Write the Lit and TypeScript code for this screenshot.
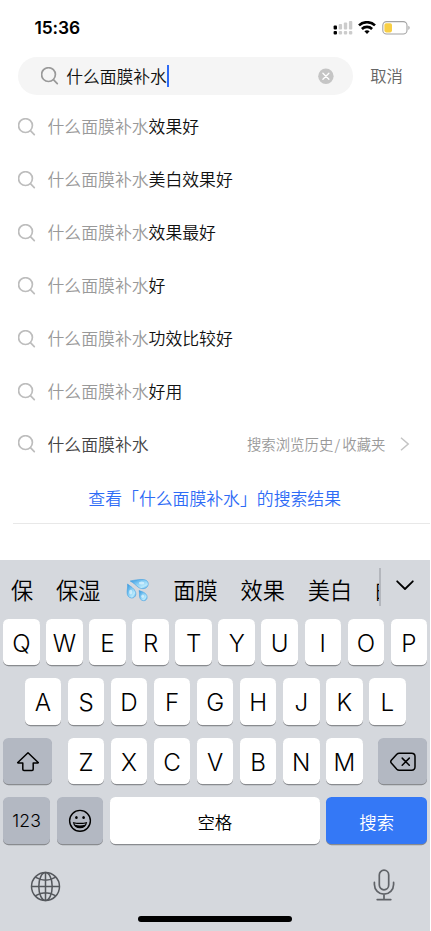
import { LitElement, html, css, svg } from "lit";
import { customElement, property } from "lit/decorators.js";
import { classMap } from "lit/directives/class-map.js";

const QUERY = "什么面膜补水";
const SUGGESTIONS = ["效果好", "美白效果好", "效果最好", "好", "功效比较好", "好用"];

const searchIcon = html`<svg class="lens" width="18" height="18" viewBox="0 0 18 18" fill="none" stroke="currentColor" stroke-width="1.7">
  <circle cx="7.5" cy="7.6" r="6.9"></circle>
  <path d="M12.4 12.6L16.3 16.6" stroke-linecap="round"></path>
</svg>`;

@customElement("status-bar")
class StatusBar extends LitElement {
  static styles = css`
    :host { display: flex; height: 57px; box-sizing: border-box; padding: 0 20px 2px 34.5px; align-items: center; justify-content: space-between; }
    .time { font: 600 17.4px/20px Inter, sans-serif; letter-spacing: -0.1px; color: #000; }
    .icons { display: flex; align-items: center; }
    .wifi { margin-left: 5.5px; }
    .battery { margin-left: 6px; }
  `;
  render() {
    const bars = [4, 5.4, 7, 8.4];
    return html`<span class="time">15:36</span>
      <span class="icons">
        <svg width="20" height="14" viewBox="0 0 20 14">
          ${bars.map((h, i) => svg`
            <rect x=${0.6 + i * 5.1} y=${8.4 - h} width="3.4" height=${h} rx="1" fill=${i ? "#ccc" : "#000"}></rect>
            <rect x=${0.6 + i * 5.1} y="10" width="3.4" height="3.6" rx="1.1" fill=${i ? "#ccc" : "#000"}></rect>`)}
        </svg>
        <svg class="wifi" width="18" height="14" viewBox="0 0 18 14" fill="none" stroke="#000" stroke-width="2.6">
          <path d="M1 4.4A11.6 11.6 0 0 1 17 4.4"></path>
          <path d="M3.9 8A7.3 7.3 0 0 1 14.1 8"></path>
          <path d="M6.4 10.3A3.9 3.9 0 0 1 11.6 10.3L9 13Z" fill="#000" stroke="none"></path>
        </svg>
        <svg class="battery" width="29" height="14" viewBox="0 0 29 14">
          <rect x="0.8" y="0.6" width="24.2" height="12.4" rx="3.8" fill="none" stroke="#a2a2a2" stroke-width="1.1"></rect>
          <rect x="2.4" y="2.2" width="7.6" height="9.2" rx="1.8" fill="#f8cf45"></rect>
          <path d="M26.4 4.7A2.4 2.4 0 0 1 26.4 8.9Z" fill="#a2a2a2"></path>
        </svg>
      </span>`;
  }
}

@customElement("search-header")
class SearchHeader extends LitElement {
  static styles = css`
    :host { display: flex; align-items: center; height: 38px; padding-left: 17.7px; font-size: 16.8px; }
    .box { display: flex; align-items: center; width: 335px; height: 38px; box-sizing: border-box; border-radius: 19px; background: #f5f5f5; padding: 0 18.5px 0 23.3px; }
    .lens { color: #999; flex: none; }
    .text { margin-left: 7.2px; color: #111; line-height: 24px; padding-bottom: 1px; }
    .caret { width: 2px; height: 22px; background: #2e6bf6; margin-left: -0.3px; }
    .clear { margin-left: auto; }
    .cancel { margin-left: 17.5px; color: #666; font-size: 16.4px; padding-bottom: 1.5px; }
  `;
  render() {
    return html`<div class="box">${searchIcon}<span class="text">${QUERY}</span><span class="caret"></span>
        <svg class="clear" width="16" height="16" viewBox="0 0 16 16"><circle cx="7.9" cy="8.3" r="7.7" fill="#c5c5c5"></circle>
          <path d="M4.9 5.3L10.9 11.3M10.9 5.3L4.9 11.3" stroke="#fff" stroke-width="1.3" stroke-linecap="round"></path></svg>
      </div><span class="cancel">取消</span>`;
  }
}

@customElement("suggestion-list")
class SuggestionList extends LitElement {
  static styles = css`
    :host { display: block; padding-top: 5.5px; font-size: 16.85px; }
    .row { display: flex; align-items: center; height: 53px; padding: 0 20px 0 18px; color: #111; }
    .row span { padding-bottom: 2.4px; }
    .row.own { height: 52px; color: #444; }
    .row.own span { padding-bottom: 1.4px; }
    .row.own .lens { margin-top: -1.5px; }
    .lens { color: #bdbdbd; flex: none; margin-right: 11.5px; }
    .dim { color: #999; }
    .row.own .history { margin-left: auto; font-size: 14.4px; color: #999; padding-bottom: 2px; }
    .slash { margin: 0 1.2px; letter-spacing: 1px; }
    .arrow { margin-left: 14.5px; margin-top: -1px; }
    .result { display: flex; justify-content: center; align-items: center; height: 53px; color: #2e6bf6; padding-right: 1.6px; }
    .line { height: 1px; background: #e8e8e8; margin: -1px 1px 0 13px; }
  `;
  render() {
    return html`${SUGGESTIONS.map((s) => html`<div class="row">${searchIcon}<span class="dim">${QUERY}</span><span>${s}</span></div>`)}
      <div class="row own">${searchIcon}<span>${QUERY}</span><span class="history">搜索浏览历史<span class="slash">/</span>收藏夹</span>
        <svg class="arrow" width="11" height="14" viewBox="0 0 11 14" fill="none" stroke="#c4c4c4" stroke-width="1.5"><path d="M1 0.8L8.2 7L1 13.2"></path></svg>
      </div>
      <div class="result">查看「${QUERY}」的搜索结果</div>
      <div class="line"></div>`;
  }
}

@customElement("key-cap")
class KeyCap extends LitElement {
  @property() kind = "letter";
  static styles = css`
    :host { display: block; height: 46.3px; }
    .cap { height: 100%; display: flex; align-items: center; justify-content: center; border-radius: 5.5px; background: #fff; color: #000; box-shadow: 0 1.2px 0 #898b8f; box-sizing: border-box; }
    .letter { font: 350 24.2px/30px Inter, sans-serif; padding-top: 3px; }
    .gray { background: #b3b8c2; font: 350 17.6px/22px Inter, sans-serif; padding-top: 1px; letter-spacing: 0.2px; }
    .word { font-size: 17.4px; padding-top: 1.5px; }
    .blue { background: #3478f6; color: #fff; }
  `;
  render() {
    const k = this.kind;
    return html`<div class=${classMap({ cap: true, letter: k === "letter", gray: k === "gray", word: k === "word" || k === "blue", blue: k === "blue" })}><slot></slot></div>`;
  }
}

const shiftIcon = html`<svg width="24" height="22" viewBox="0 0 24 22" fill="none" stroke="#000" stroke-width="1.5" stroke-linejoin="round">
  <path d="M12 1.7L22.2 11.5Q22.5 12 21.8 12H17.2V18.2Q17.2 19.4 16 19.4H8Q6.8 19.4 6.8 18.2V12H2.2Q1.5 12 1.8 11.5Z"></path></svg>`;

const deleteIcon = html`<svg width="26" height="20" viewBox="0 0 26 20" fill="none" stroke="#000" stroke-width="1.5" stroke-linejoin="round" stroke-linecap="round">
  <path d="M9.2 1.2H21.6Q25 1.2 25 4.6V14.8Q25 18.2 21.6 18.2H9.2Q7.8 18.2 6.8 17.2L1.3 11.1Q0.2 9.7 1.3 8.3L6.8 2.2Q7.8 1.2 9.2 1.2Z"></path>
  <path d="M12.2 6.1L19.3 13.3M19.3 6.1L12.2 13.3"></path></svg>`;

const smileIcon = html`<svg width="24" height="24" viewBox="0 0 24 24" fill="none" stroke="#000" stroke-width="1.4">
  <circle cx="12" cy="11.8" r="10.4"></circle>
  <ellipse cx="8.4" cy="8.4" rx="1.3" ry="1.5" fill="#000" stroke="none"></ellipse>
  <ellipse cx="15.6" cy="8.4" rx="1.3" ry="1.5" fill="#000" stroke="none"></ellipse>
  <path d="M4.8 12.9Q12 14.6 19.2 12.9Q18 19.2 12 19.2T4.8 12.9Z" fill="#000" stroke="none"></path>
  <path d="M6.3 14.4Q12 15.5 17.7 14.4L16.9 15.7Q12 17.2 7.1 15.7Z" fill="#b3b8c2" stroke="none"></path></svg>`;

const dropsIcon = html`<svg class="drops" width="24" height="24" viewBox="0 0 24 24">
  <defs><linearGradient id="g" x1="0" y1="0" x2="1" y2="1"><stop offset="0" stop-color="#2f93de"></stop><stop offset=".45" stop-color="#86cdf4"></stop><stop offset=".75" stop-color="#b9e9fc"></stop><stop offset="1" stop-color="#369be3"></stop></linearGradient></defs>
  <g fill="url(#g)" stroke="#3f9fe2" stroke-width=".6">
    <path d="M4.2 3C8.5 2.2 13 1.2 17.2 1.5C21.8 1.9 23.4 5.5 21.4 8.5C19.3 11.4 14.8 11.2 12 9C9.6 7 7.6 4.9 4.2 3Z"></path>
    <path d="M1.5 6C4.3 8.3 8.5 10.5 9.6 14.1C10.6 17.7 8.3 20.2 5.5 20C2.5 19.8 1 17.2 1.1 14.1C1.2 11.3 1.9 8.7 1.5 6Z"></path>
    <path d="M13 12.5C15.7 13.6 19.5 14.4 20.7 17.3C21.8 20 20.4 22.6 17.8 22.7C15.1 22.8 13.6 20.6 13.5 18.1C13.4 16.1 13.7 14.4 13 12.5Z"></path>
  </g>
  <g fill="#e4f7ff" opacity=".7"><ellipse cx="15.6" cy="5" rx="2.8" ry="1.5"></ellipse><ellipse cx="4.7" cy="14.1" rx="1.6" ry="2.4"></ellipse><ellipse cx="16.7" cy="18.2" rx="1.4" ry="1.7"></ellipse></g>
</svg>`;

@customElement("soft-keyboard")
class SoftKeyboard extends LitElement {
  static styles = css`
    :host { display: block; height: 370.7px; width: 430px; background: #d5d8dd; }
    .candidates { display: flex; height: 58.6px; align-items: center; font-size: 22.2px; color: #000; }
    .words { display: flex; align-items: center; width: 380px; height: 58px; overflow: hidden; white-space: nowrap; padding: 0 0 2px 11px; box-sizing: border-box; gap: 22.9px; }
    .words span { flex: none; }
    .drops { flex: none; margin: 2.5px 0.5px 0 2.5px; }
    .sep { width: 1.6px; height: 38px; background: #b4b7bd; margin-top: -6px; margin-left: -1px; }
    .down { margin: -8px 0 0 15.6px; }
    .rows { display: grid; row-gap: 13.2px; padding: 0 3.2px; }
    .keys { display: flex; gap: 6.5px; justify-content: center; }
    .keys key-cap { width: 36.55px; flex: none; }
    .keys .side { width: 48.7px; }
    .keys .first { margin-right: 9.2px; }
    .keys .last { margin-left: 9.2px; }
    .keys .small { width: 46.9px; }
    .keys .space { flex: 1; width: auto; }
    .keys .go { width: 101px; }
    .foot { display: flex; justify-content: space-between; padding: 27px 35px 0 30px; height: 36px; align-items: flex-start; }
    .mic { margin-top: -1.4px; }
    .home { width: 153.5px; height: 5.6px; border-radius: 3px; background: #000; margin: 9.7px auto 0; }
  `;
  letters(s: string) {
    return [...s].map((c) => html`<key-cap>${c}</key-cap>`);
  }
  render() {
    return html`<div class="candidates">
        <div class="words"><span>保</span><span>保湿</span>${dropsIcon}<span>面膜</span><span>效果</span><span>美白</span><span>的</span></div>
        <div class="sep"></div>
        <svg class="down" width="18" height="11" viewBox="0 0 18 11" fill="none" stroke="#000" stroke-width="1.8" stroke-linecap="round" stroke-linejoin="round"><path d="M1.2 1.3L9 9L16.8 1.3"></path></svg>
      </div>
      <div class="rows">
        <div class="keys">${this.letters("QWERTYUIOP")}</div>
        <div class="keys">${this.letters("ASDFGHJKL")}</div>
        <div class="keys"><key-cap kind="gray" class="side first">${shiftIcon}</key-cap>${this.letters("ZXCVBNM")}<key-cap kind="gray" class="side last">${deleteIcon}</key-cap></div>
        <div class="keys"><key-cap kind="gray" class="small">123</key-cap><key-cap kind="gray" class="small">${smileIcon}</key-cap><key-cap kind="word" class="space">空格</key-cap><key-cap kind="blue" class="go">搜索</key-cap></div>
      </div>
      <div class="foot">
        <svg width="31" height="31" viewBox="0 0 31 31" fill="none" stroke="#55585d" stroke-width="1.5">
          <circle cx="15.5" cy="15.5" r="14"></circle><ellipse cx="15.5" cy="15.5" rx="6.7" ry="14"></ellipse>
          <path d="M15.5 1.5V29.5M1.5 15.5H29.5M5.2 6.2Q15.5 12.2 25.8 6.2M5.2 24.8Q15.5 18.8 25.8 24.8"></path>
        </svg>
        <svg class="mic" width="22" height="33" viewBox="0 0 22 33" fill="none" stroke="#606368" stroke-width="1.7" stroke-linecap="round">
          <rect x="6.3" y="1.2" width="9.4" height="19.6" rx="4.7"></rect>
          <path d="M1.4 13.4V15.6A9.6 9.6 0 0 0 20.6 15.6V13.4M11 25.2V30.4M4.2 30.6H17.8"></path>
        </svg>
      </div>
      <div class="home"></div>`;
  }
}

@customElement("app-root")
class AppRoot extends LitElement {
  static styles = css`
    :host { display: flex; flex-direction: column; width: 431px; height: 931px; background: #fff; overflow: hidden; font-family: "Noto Sans CJK SC", sans-serif; font-weight: 350; }
    soft-keyboard { margin-top: auto; }
  `;
  render() {
    return html`<status-bar></status-bar><search-header></search-header><suggestion-list></suggestion-list><soft-keyboard></soft-keyboard>`;
  }
}
